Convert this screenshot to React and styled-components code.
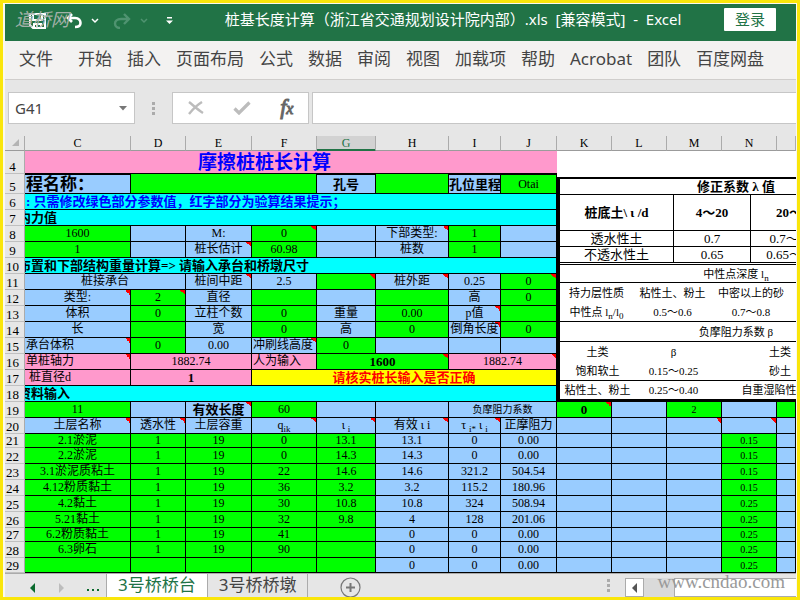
import React from 'react'
import styled, { createGlobalStyle, css } from 'styled-components'

const SONG = `'Liberation Serif', 'Noto Sans CJK SC', serif`
const UI = `'Noto Sans', 'Noto Sans CJK SC', sans-serif`

const tones = {
  b: '#99ccff',
  g: '#00ff00',
  p: '#ff99cc',
  c: '#00ffff',
  y: '#ffff00',
}

const GlobalStyle = createGlobalStyle`
  * {
    box-sizing: border-box;
  }
  body {
    margin: 0;
    background: #e6e6e6;
  }
  button, input {
    margin: 0;
    padding: 0;
    border: none;
    background: none;
    font: inherit;
    color: inherit;
  }
`

const Frame = styled.div`
  position: relative;
  border: 3px solid #fae60a;
  padding: 1px 1px 0 2px;
  background: #fbf8ec;
  font-family: ${UI};
  overflow: hidden;
`

const Watermark = styled.span`
  position: absolute;
  font-family: ${SONG};
  line-height: 24px;
  color: ${({ $tint }) => $tint};
  pointer-events: none;
  ${({ $corner }) =>
    $corner === 'top'
      ? css`
          top: 5px;
          left: 12px;
          font-size: 18px;
          font-style: italic;
        `
      : css`
          right: 12px;
          bottom: 3px;
          font-size: 19px;
        `}
`

const TitleBar = styled.header`
  display: flex;
  align-items: center;
  height: 37px;
  padding: 0 20px 7px 24px;
  background: #217346;
  color: #fff;
`

const QuickAccess = styled.div`
  display: flex;
  align-items: center;
  width: 153px;
  padding-top: 4px;
  button {
    display: flex;
  }
`

const QuickButton = styled.button`
  margin-right: ${({ $gap }) => $gap}px;
  color: ${({ $dim }) => ($dim ? '#4f9370' : '#fff')};
`

const Title = styled.h1`
  flex: 1;
  margin: 0;
  font-size: 15px;
  line-height: 22px;
  font-weight: 400;
  text-align: center;
  white-space: nowrap;
`

const SignIn = styled.button`
  width: 52px;
  height: 23px;
  border-radius: 1px;
  background: #fff;
  color: #217346;
  font-size: 15px;
  line-height: 22px;
`

const Ribbon = styled.nav`
  display: flex;
  gap: 15px;
  height: 39px;
  padding: 0 14px;
  background: #f3f2f1;
  border-bottom: 1px solid #d0cecc;
  a {
    font-size: 17px;
    line-height: 36px;
    color: #444;
    text-decoration: none;
    white-space: nowrap;
  }
  a:first-child {
    margin-right: 10px;
  }
`

const FormulaRow = styled.div`
  display: flex;
  gap: 3px;
  padding: 12px 0 12px 3px;
  background: #e6e6e6;
`

const Field = styled.div`
  display: flex;
  align-items: center;
  height: 32px;
  flex: ${({ $grow }) => ($grow ? '1' : 'none')};
  width: ${({ $width }) => $width || 'auto'};
  border: 1px solid #c6c6c6;
  border-right-width: ${({ $grow }) => ($grow ? 0 : '1px')};
  background: #fff;
  color: #444;
  font-size: 15px;
  input {
    flex: 1;
    min-width: 0;
    height: 100%;
    padding-left: 6px;
    outline: none;
  }
  button {
    display: flex;
    padding-right: 7px;
  }
`

const FormulaTools = styled(Field)`
  justify-content: space-around;
  button {
    padding: 0;
  }
`

const FxButton = styled.button`
  align-items: baseline;
  color: #666;
  font-family: 'Liberation Serif', serif;
  font-size: 22px;
  font-style: italic;
  line-height: 24px;
  -webkit-text-stroke: 1px #666;
  small {
    font-size: 16px;
  }
`

const Grip = styled.span`
  display: flex;
  flex-direction: column;
  justify-content: center;
  align-items: center;
  gap: 2px;
  width: ${({ $width }) => $width}px;
  i {
    width: 3px;
    height: 3px;
    background: #ababab;
  }
`

const Sheet = styled.div`
  overflow: hidden;
  background: #fff;
  border-bottom: 1px solid #ababab;
`

const Grid = styled.table`
  width: 100%;
  table-layout: fixed;
  border-collapse: separate;
  border-spacing: 0;
  font-family: ${SONG};
  font-size: 12px;
  line-height: 13px;
  color: #000;
  th,
  td {
    padding: 0;
    overflow: hidden;
    white-space: nowrap;
  }
  sub {
    font-size: 9px;
    line-height: 0;
  }
`

const ColumnHead = styled.th`
  height: 15px;
  border-right: 1px solid #ababab;
  border-bottom: 1px solid #9b9b9b;
  background: #e6e6e6;
  font-weight: 400;
  vertical-align: bottom;
  ${({ $active }) =>
    $active &&
    css`
      background: #d2d2d2;
      color: #217346;
      box-shadow: inset 0 -1px #217346;
      border-bottom-color: #217346;
    `}
`

const RowHead = styled.th`
  border-right: 1px solid #ababab;
  border-bottom: 1px solid #c0c0c0;
  background: #e6e6e6;
  font-size: 13px;
  font-weight: 400;
  text-align: center;
  vertical-align: bottom;
  && {
    padding-right: 4px;
  }
`

const Row = styled.tr`
  height: ${({ $height }) => $height}px;
`

const Cell = styled.td`
  border-right: 1px solid #000;
  border-bottom: 1px solid #000;
  background-color: ${({ $tone }) => tones[$tone]};
  text-align: center;
  ${({ $left }) =>
    $left &&
    css`
      text-align: left;
      text-indent: 1px;
    `}
  ${({ $bold }) =>
    $bold &&
    css`
      font-size: 13px;
      font-weight: 700;
    `}
  ${({ $size }) =>
    $size &&
    css`
      font-size: ${$size}px;
    `}
  ${({ $color }) =>
    $color &&
    css`
      color: ${$color};
    `}
  ${({ $over }) =>
    $over &&
    css`
      border-top: 1px solid #000;
    `}
  ${({ $scrolled }) =>
    $scrolled &&
    css`
      text-align: left;
      text-indent: -7px;
    `}
  ${({ $note }) =>
    $note &&
    css`
      background-image: linear-gradient(45deg, transparent 50%, #f00 50%);
      background-repeat: no-repeat;
      background-position: right top;
      background-size: 5px 5px;
    `}
`

const TitleCell = styled(Cell)`
  && {
    padding-right: 53px;
  }
  border-right: none;
  color: #0000ff;
  font-size: 19px;
  font-weight: 700;
`

const FloatCell = styled.td`
  vertical-align: bottom;
`

const Reference = styled.div`
  height: 225px;
  border: solid #000;
  border-width: 2px 0 3px 3px;
  background: #fff;
`

const RefTable = styled.table`
  width: 352px;
  table-layout: fixed;
  border-collapse: separate;
  border-spacing: 0;
  font-size: ${({ $size }) => $size}px;
  line-height: 14px;
  border-bottom: ${({ $rule }) => $rule || 'none'};
  td,
  th {
    text-align: center;
    border: solid #000;
    border-width: 0;
  }
  th {
    font-weight: ${({ $strong }) => ($strong ? 700 : 400)};
  }
`

const RefRow = styled.tr`
  height: ${({ $height }) => $height}px;
  && > * {
    border-bottom-width: ${({ $line }) => ($line ? '1px' : 0)};
    border-right-width: ${({ $ruled }) => ($ruled ? '1px' : 0)};
  }
`

const TabBar = styled.footer`
  display: flex;
  height: 23px;
  background: #e6e6e6;
`

const TabNav = styled.div`
  display: flex;
  align-items: center;
  gap: 22px;
  width: 101px;
  padding: 4px 0 0 24px;
  button {
    display: flex;
  }
`

const Tab = styled.a`
  padding: 0 11px;
  border-right: 1px solid #ababab;
  border-left: ${({ $active }) => ($active ? '1px solid #ababab' : 'none')};
  background: ${({ $active }) => ($active ? '#fff' : 'transparent')};
  color: ${({ $active }) => ($active ? '#217346' : '#444')};
  font-size: 17px;
  line-height: 22px;
  text-decoration: none;
  white-space: nowrap;
`

const AddSheet = styled.button`
  display: flex;
  align-items: flex-end;
  margin: 0 auto 0 32px;
`

const ScrollBar = styled.div`
  display: flex;
  width: 171px;
  height: 19px;
  margin-top: 4px;
  background: #dadada;
  button {
    display: flex;
    align-items: center;
    justify-content: center;
    width: 19px;
    border: 1px solid #ababab;
    background: #fff;
  }
`

const Thumb = styled.div`
  flex: 1;
  margin-left: 30px;
  border: solid #ababab;
  border-width: 1px 0 1px 1px;
  background: #fff;
`

const Chevron = () => (
  <svg width="8" height="6" viewBox="0 0 8 6" fill="none" stroke="currentColor" strokeWidth="1.5">
    <path d="M1 1l3 3 3-3" />
  </svg>
)

const Arrow = ({ color, flip }) => (
  <svg width="7" height="10" viewBox="0 0 7 10" fill={color}>
    <path d={flip ? 'M1 0l5 5-5 5z' : 'M6 0L1 5l5 5z'} />
  </svg>
)

const Dots = ({ width }) => (
  <Grip $width={width}>
    <i />
    <i />
    <i />
  </Grip>
)

const ribbonTabs = [
  '文件', '开始', '插入', '页面布局', '公式', '数据', '审阅',
  '视图', '加载项', '帮助', 'Acrobat', '团队', '百度网盘',
]

const columns = [
  ['C', 106], ['D', 55], ['E', 66], ['F', 65], ['G', 59], ['H', 73], ['I', 52],
  ['J', 56], ['K', 55], ['L', 55], ['M', 55], ['N', 55],
]

// one cell: [tone, text, options]
const note = { note: true }
const headOver = { bold: true, over: true }

const rows = [
  [5, 20, [
    ['b', '程名称：', { left: true, size: 17, bold: true, over: true }],
    ['g', '', { span: 3 }], ['b', '孔号', headOver], ['g', ''],
    ['b', '孔位里程', headOver], ['g', 'Otai', { over: true }],
  ]],
  [6, 16, [['c', ': 只需修改绿色部分参数值，红字部分为验算结果提示；', { span: 8, bold: true, left: true, color: '#0000ff' }]]],
  [7, 16, [['c', '内力值', { span: 8, bold: true, scrolled: true }]]],
  [8, 16, [['g', '1600'], ['b', ''], ['b', 'M:'], ['g', '0', note], ['b', ''], ['b', '下部类型:', note], ['g', '1'], ['b', '']]],
  [9, 16, [['g', '1'], ['b', ''], ['b', '桩长估计', note], ['g', '60.98'], ['b', ''], ['b', '桩数'], ['g', '1'], ['b', '']]],
  [10, 16, [['c', '布置和下部结构重量计算=> 请输入承台和桥墩尺寸', { span: 8, bold: true, scrolled: true }]]],
  [11, 16, [['b', '桩接承台', { span: 2 }], ['b', '桩间中距', note], ['b', '2.5'], ['g', '', note], ['b', '桩外距', note], ['b', '0.25'], ['g', '0', note]]],
  [12, 16, [['b', '类型:', note], ['g', '2', note], ['b', '直径'], ['g', ''], ['b', ''], ['g', ''], ['b', '高'], ['g', '0']]],
  [13, 16, [['b', '体积'], ['g', '0'], ['b', '立柱个数'], ['g', '0'], ['b', '重量'], ['g', '0.00'], ['b', 'p值', note], ['g', '']]],
  [14, 16, [['b', '长'], ['g', ''], ['b', '宽'], ['g', '0'], ['b', '高'], ['g', '0'], ['b', '倒角长度', note], ['g', '0']]],
  [15, 16, [['b', '承台体积', { left: true, note: true }], ['g', '0'], ['b', '0.00'], ['b', '冲刷线高度', { left: true, note: true }], ['g', '0'], ['b', ''], ['b', ''], ['b', '']]],
  [16, 16, [
    ['p', '单桩轴力', { left: true, note: true }], ['p', '1882.74', { span: 2 }], ['p', '人为输入', { left: true }],
    ['g', '1600', { span: 2, bold: true, note: true }], ['p', '1882.74', { span: 2, note: true }],
  ]],
  [17, 16, [['p', '\u00a0桩直径d', { left: true }], ['p', '1', { span: 2, bold: true }], ['y', '请核实桩长输入是否正确', { span: 5, bold: true, color: '#ff0000' }]]],
  [18, 16, [['c', '资料输入', { span: 8, bold: true, scrolled: true }]]],
  [19, 16, [
    ['g', '11'], ['b', ''], ['b', '有效长度', { bold: true, note: true }], ['g', '60'], ['b', ''], ['b', ''],
    ['b', '负摩阻力系数', { span: 2, size: 10 }], ['g', '0', { bold: true, note: true }], ['b', ''], ['g', '2', { size: 10 }], ['b', ''], ['g', ''],
  ]],
  [20, 16, [
    ['b', '土层名称', note], ['b', '透水性', note], ['b', '土层容重'], ['b', <>q<sub>ik</sub></>, note],
    ['b', <>ι <sub>i</sub></>, note], ['b', '有效 ι i', note], ['b', <>τ <sub>i*</sub> ι <sub>i</sub></>, note],
    ['b', '正摩阻力'], ['b', ''], ['b', ''], ['b', '', note], ['b', '', note], ['b', ''],
  ]],
]

const soils = [
  [21, 14, '2.1淤泥', '1', '19', '0', '13.1', '13.1', '0', '0.00', '0.15'],
  [22, 16, '2.2淤泥', '1', '19', '0', '14.3', '14.3', '0', '0.00', '0.15'],
  [23, 16, '3.1淤泥质粘土', '1', '19', '22', '14.6', '14.6', '321.2', '504.54', '0.15'],
  [24, 16, '4.12粉质黏土', '1', '19', '36', '3.2', '3.2', '115.2', '180.96', '0.15'],
  [25, 16, '4.2黏土', '1', '19', '30', '10.8', '10.8', '324', '508.94', '0.25'],
  [26, 16, '5.21黏土', '1', '19', '32', '9.8', '4', '128', '201.06', '0.25'],
  [27, 14, '6.2粉质黏土', '1', '19', '41', '', '0', '0', '0.00', '0.25'],
  [28, 16, '6.3卵石', '1', '19', '90', '', '0', '0', '0.00', '0.25'],
  [29, 15, '', '', '', '', '', '0', '0', '0.00', '0.25'],
]

const soilRows = soils.map(([id, height, ...values]) => {
  const beta = values.pop()
  const cells = values.map((text, i) => [i < 5 ? 'g' : 'b', text])
  return [id, height, [...cells, ['b', ''], ['b', ''], ['b', ''], ['g', beta, { size: 10 }], ['b', '']]]
})

const SheetRow = ({ id, height, cells }) => (
  <Row $height={height}>
    <RowHead scope="row">{id}</RowHead>
    {cells.map(([tone, text, o = {}], i) => (
      <Cell
        key={i}
        colSpan={o.span}
        $tone={tone}
        $note={o.note}
        $bold={o.bold}
        $left={o.left}
        $size={o.size}
        $color={o.color}
        $over={o.over}
        $scrolled={o.scrolled}
      >
        {text}
      </Cell>
    ))}
  </Row>
)

const Cols = ({ widths }) => (
  <colgroup>
    {widths.map((width, i) => (
      <col key={i} style={width ? { width } : undefined} />
    ))}
  </colgroup>
)

const ReferenceTables = () => (
  <Reference>
    <RefTable $size={13} $strong $rule="3px double #000">
      <Cols widths={[114, 77, 90, 0]} />
      <tbody>
        <RefRow $height={16} $line>
          <th colSpan="4">修正系数 λ 值</th>
        </RefRow>
        <RefRow $height={36} $line $ruled>
          <th>桩底土\ ι /d</th>
          <th>4～20</th>
          <th>20～70</th>
          <th />
        </RefRow>
        <RefRow $height={16} $line $ruled>
          <td>透水性土</td>
          <td>0.7</td>
          <td>0.7～0.85</td>
          <td />
        </RefRow>
        <RefRow $height={15} $ruled>
          <td>不透水性土</td>
          <td>0.65</td>
          <td>0.65～0.72</td>
          <td />
        </RefRow>
      </tbody>
    </RefTable>
    <RefTable $size={11}>
      <Cols widths={[73, 79, 78, 0]} />
      <tbody>
        <RefRow $height={18} $line>
          <th colSpan="4">中性点深度 l<sub>n</sub></th>
        </RefRow>
        <RefRow $height={20}>
          <td>持力层性质</td>
          <td>粘性土、粉土</td>
          <td>中密以上的砂</td>
          <td />
        </RefRow>
        <RefRow $height={19} $line>
          <td>中性点 l<sub>n</sub>/l<sub>0</sub></td>
          <td>0.5～0.6</td>
          <td>0.7～0.8</td>
          <td />
        </RefRow>
      </tbody>
    </RefTable>
    <RefTable $size={11}>
      <Cols widths={[75, 77, 136, 0]} />
      <tbody>
        <RefRow $height={20} $line>
          <th colSpan="4">负摩阻力系数 β</th>
        </RefRow>
        <RefRow $height={19}>
          <td>土类</td>
          <td>β</td>
          <td>土类</td>
          <td />
        </RefRow>
        <RefRow $height={20} $line>
          <td>饱和软土</td>
          <td>0.15～0.25</td>
          <td>砂土</td>
          <td />
        </RefRow>
        <RefRow $height={18}>
          <td>粘性土、粉土</td>
          <td>0.25～0.40</td>
          <td>自重湿陷性黄土</td>
          <td />
        </RefRow>
      </tbody>
    </RefTable>
  </Reference>
)

const TopBar = () => (
  <TitleBar>
    <QuickAccess>
      <QuickButton $gap={20} aria-label="保存">
        <svg width="17" height="16" viewBox="0 0 17 16" fill="none" stroke="currentColor" strokeWidth="2">
          <path d="M1 1h15v14H4l-3-3zM4 1v6h9V1M5 15v-4h7v4M8 12v3" />
        </svg>
      </QuickButton>
      <QuickButton $gap={9} aria-label="撤消">
        <svg width="16" height="16" viewBox="0 0 16 16" fill="none" stroke="currentColor" strokeWidth="2.6">
          <path d="M6 1L2 5l4 4M2 5h7c4 0 5.500 2.500 5.500 5s-2 4-5.500 4" />
        </svg>
      </QuickButton>
      <QuickButton $gap={14} aria-label="撤消选项">
        <Chevron />
      </QuickButton>
      <QuickButton $gap={9} $dim aria-label="恢复">
        <svg width="18" height="16" viewBox="0 0 18 16" fill="none" stroke="currentColor" strokeWidth="2.4">
          <path d="M11 1l5 5-5 5M16 6H8c-4 0-6 2-6 4.500S4 15 7 15" />
        </svg>
      </QuickButton>
      <QuickButton $gap={18} $dim aria-label="恢复选项">
        <Chevron />
      </QuickButton>
      <QuickButton $gap={0} aria-label="自定义快速访问工具栏">
        <svg width="7" height="8" viewBox="0 0 7 8" fill="currentColor">
          <path d="M1 0h5v1.500H1zM0 3.500h7L3.500 7z" />
        </svg>
      </QuickButton>
    </QuickAccess>
    <Title>桩基长度计算（浙江省交通规划设计院内部）.xls&nbsp; [兼容模式]&nbsp; -&nbsp; Excel</Title>
    <SignIn>登录</SignIn>
  </TitleBar>
)

const FormulaBar = () => (
  <FormulaRow>
    <Field $width="127px">
      <input aria-label="名称框" defaultValue="G41" />
      <button aria-label="名称列表">
        <svg width="8" height="5" viewBox="0 0 8 5" fill="#777">
          <path d="M0 0h8L4 4.500z" />
        </svg>
      </button>
    </Field>
    <Dots width={31} />
    <FormulaTools $width="137px">
      <button aria-label="取消">
        <svg width="16" height="14" viewBox="0 0 16 14" fill="none" stroke="#bcbcbc" strokeWidth="2.400">
          <path d="M1 1c5 4 9 8 14 11M14 1C9 4 5 8 1 13" />
        </svg>
      </button>
      <button aria-label="输入">
        <svg width="18" height="14" viewBox="0 0 18 14" fill="none" stroke="#bcbcbc" strokeWidth="3.200">
          <path d="M1.500 7.500L6 12 16.500 1.500" />
        </svg>
      </button>
      <FxButton aria-label="插入函数">
        f<small>x</small>
      </FxButton>
    </FormulaTools>
    <Field $grow>
      <input aria-label="编辑栏" />
    </Field>
  </FormulaRow>
)

const Worksheet = () => (
  <Sheet>
    <Grid>
      <Cols widths={[20, ...columns.map(([, width]) => width), 0]} />
      <thead>
        <tr>
          <ColumnHead>
            <svg width="8" height="8" viewBox="0 0 8 8" fill="#b4b4b4">
              <path d="M8 0v7H1z" />
            </svg>
          </ColumnHead>
          {columns.map(([name]) => (
            <ColumnHead key={name} scope="col" $active={name === 'G'}>
              {name}
            </ColumnHead>
          ))}
          <ColumnHead />
        </tr>
      </thead>
      <tbody>
        <Row $height={23}>
          <RowHead scope="row">4</RowHead>
          <TitleCell $tone="p" colSpan="8">
            摩擦桩桩长计算
          </TitleCell>
          <FloatCell colSpan="5" rowSpan="15">
            <ReferenceTables />
          </FloatCell>
        </Row>
        {[...rows, ...soilRows].map(([id, height, cells]) => (
          <SheetRow key={id} id={id} height={height} cells={cells} />
        ))}
      </tbody>
    </Grid>
  </Sheet>
)

const BottomBar = () => (
  <TabBar>
    <TabNav>
      <button aria-label="上一张">
        <Arrow color="#0b6a2e" />
      </button>
      <button aria-label="下一张">
        <Arrow color="#bdbdbd" flip />
      </button>
      <button aria-label="更多工作表">
        <svg width="14" height="10" viewBox="0 0 14 10" fill="#0b6a2e">
          <path d="M0 6h2v2H0zM5 6h2v2H5zM10 6h2v2h-2z" />
        </svg>
      </button>
    </TabNav>
    <Tab href="#abutment" $active>
      3号桥桥台
    </Tab>
    <Tab href="#pier">3号桥桥墩</Tab>
    <AddSheet aria-label="新工作表">
      <svg width="21" height="20" viewBox="0 0 21 20" fill="none" stroke="#777">
        <circle cx="10.500" cy="10.500" r="9.500" strokeWidth="1.200" />
        <path d="M10.500 6v9M6 10.500h9" strokeWidth="2" />
      </svg>
    </AddSheet>
    <Dots width={34} />
    <ScrollBar>
      <button aria-label="向左滚动">
        <Arrow color="#555" />
      </button>
      <Thumb />
    </ScrollBar>
  </TabBar>
)

export default function App() {
  return (
    <>
      <GlobalStyle />
      <Frame>
        <TopBar />
        <Ribbon>
          {ribbonTabs.map((name) => (
            <a key={name} href="#ribbon">
              {name}
            </a>
          ))}
        </Ribbon>
        <FormulaBar />
        <Worksheet />
        <BottomBar />
        <Watermark $corner="top" $tint="#a3b0a8">
          道桥网
        </Watermark>
        <Watermark $corner="bottom" $tint="#999">
          www.cndao.com
        </Watermark>
      </Frame>
    </>
  )
}
